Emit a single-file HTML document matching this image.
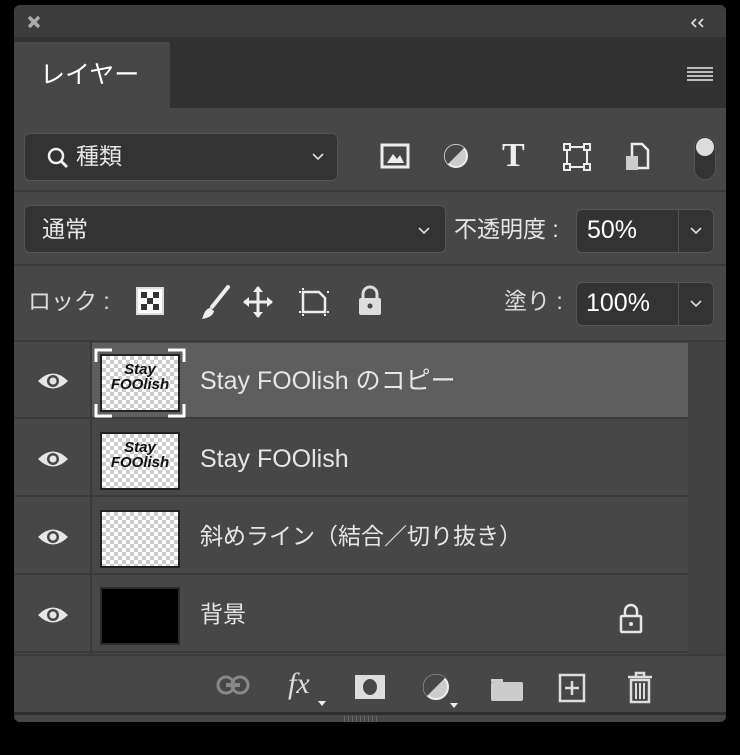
<!DOCTYPE html>
<html><head><meta charset="utf-8"><style>
*{margin:0;padding:0;box-sizing:border-box}
body{width:740px;height:755px;background:#000;position:relative;overflow:hidden;font-family:"Liberation Sans","Noto Sans CJK JP",sans-serif;color:#e6e6e6}
.a{position:absolute}
.panel{left:14px;top:5px;width:712px;height:717px;background:#474747;border-radius:6px;overflow:hidden}
.box{background:#333;border:1px solid #555;border-radius:6px}
.t{font-size:24px;white-space:nowrap;line-height:1}
.chk{background-color:#fff;background-image:linear-gradient(45deg,#ccc 25%,transparent 25%,transparent 75%,#ccc 75%),linear-gradient(45deg,#ccc 25%,transparent 25%,transparent 75%,#ccc 75%);background-size:8px 8px;background-position:0 0,4px 4px;border:2px solid #222}
.eye{left:23px;width:32px;height:20px}
.row{left:0;width:674px;height:77px;border-bottom:2px solid #3a3a3a}
</style></head><body>
<div class="a panel">
 <div class="a" style="left:0;top:0;width:712px;height:32px;background:#3c3c3c"></div>
 <svg class="a" style="left:13px;top:10px" width="14" height="14"><path d="M2 2l10 10M12 2L2 12" stroke="#aaa" stroke-width="3.5"/></svg>
 <svg class="a" style="left:676px;top:12px" width="16" height="12"><path d="M6 2L2 6l4 4M13 2L9 6l4 4" fill="none" stroke="#ddd" stroke-width="1.6"/></svg>
 <div class="a" style="left:0;top:32px;width:712px;height:71px;background:#323232"></div>
 <div class="a" style="left:0;top:37px;width:156px;height:71px;background:#474747"></div>
 <div class="a t" style="left:26px;top:58px;color:#fff;font-size:25px">レイヤー</div>
 <svg class="a" style="left:673px;top:61px" width="26" height="16"><path d="M0 2h26M0 6h26M0 10h26M0 14h26" stroke="#bbb" stroke-width="2"/></svg>

 <div class="a box" style="left:10px;top:128px;width:314px;height:48px"></div>
 <svg class="a" style="left:32px;top:141px" width="24" height="24"><circle cx="10" cy="10" r="7" fill="none" stroke="#eee" stroke-width="2.5"/><path d="M15 15l6 6" stroke="#eee" stroke-width="3"/></svg>
 <div class="a t" style="left:62px;top:140px;font-size:23px">種類</div>
 <svg class="a" style="left:298px;top:148px" width="12" height="8"><path d="M1 1l5 5 5-5" fill="none" stroke="#ddd" stroke-width="1.6"/></svg>
 <svg class="a" style="left:366px;top:138px" width="30" height="26"><rect x="2" y="2" width="26" height="22" fill="none" stroke="#eee" stroke-width="3"/><path d="M7 20l6-9 4 5 3-4 4 8z" fill="#eee"/></svg>
 <svg class="a" style="left:428px;top:137px" width="28" height="28"><circle cx="14" cy="14" r="11" fill="#ccc" stroke="#eee" stroke-width="2"/><path d="M22 6A11 11 0 0 0 6 22z" fill="#474747"/></svg>
 <div class="a" style="left:488px;top:134px;font-size:34px;line-height:1;font-weight:bold;font-family:'Liberation Serif',serif;color:#eee">T</div>
 <svg class="a" style="left:548px;top:137px" width="30" height="30"><rect x="5" y="5" width="20" height="20" fill="none" stroke="#eee" stroke-width="2"/><g fill="#474747" stroke="#eee" stroke-width="2"><rect x="2" y="2" width="6" height="6"/><rect x="22" y="2" width="6" height="6"/><rect x="2" y="22" width="6" height="6"/><rect x="22" y="22" width="6" height="6"/></g></svg>
 <svg class="a" style="left:610px;top:137px" width="28" height="30"><path d="M8 2h10l6 6v18H8z" fill="none" stroke="#eee" stroke-width="2.5"/><rect x="2" y="14" width="12" height="14" fill="#ccc"/></svg>
 <div class="a" style="left:680px;top:131px;width:22px;height:44px;border-radius:11px;background:#333;border:1px solid #555"></div>
 <div class="a" style="left:682px;top:133px;width:18px;height:18px;border-radius:9px;background:#ddd"></div>

 <div class="a" style="left:0;top:185px;width:712px;height:2px;background:#3a3a3a"></div>
 <div class="a box" style="left:10px;top:200px;width:422px;height:48px"></div>
 <div class="a t" style="left:28px;top:213px;font-size:23px">通常</div>
 <svg class="a" style="left:404px;top:222px" width="12" height="8"><path d="M1 1l5 5 5-5" fill="none" stroke="#ddd" stroke-width="1.6"/></svg>
 <div class="a t" style="left:440px;top:213px;font-size:23px">不透明度 :</div>
 <div class="a box" style="left:562px;top:204px;width:138px;height:44px"></div>
 <div class="a" style="left:664px;top:205px;width:1px;height:42px;background:#555"></div>
 <div class="a t" style="left:573px;top:213px;font-size:25px;color:#fff">50%</div>
 <svg class="a" style="left:676px;top:222px" width="12" height="8"><path d="M1 1l5 5 5-5" fill="none" stroke="#ddd" stroke-width="1.6"/></svg>

 <div class="a" style="left:0;top:259px;width:712px;height:2px;background:#3a3a3a"></div>
 <div class="a t" style="left:14px;top:285px;font-size:23px;color:#ddd">ロック :</div>
 <svg class="a" style="left:122px;top:282px" width="30" height="30"><rect x="1" y="1" width="26" height="26" fill="#fff" stroke="#ddd" stroke-width="2"/><g fill="#333"><rect x="5" y="5" width="6" height="6"/><rect x="17" y="5" width="6" height="6"/><rect x="11" y="11" width="6" height="6"/><rect x="5" y="17" width="6" height="6"/><rect x="17" y="17" width="6" height="6"/></g></svg>
 <svg class="a" style="left:186px;top:280px" width="30" height="36"><path d="M28 2L12 22" stroke="#eee" stroke-width="4" stroke-linecap="round"/><path d="M10 23c-5 1-6 6-8 11 6-1 11-3 12-8z" fill="#eee"/></svg>
 <svg class="a" style="left:228px;top:280px" width="32" height="34"><path d="M16 2v30M2 17h28" stroke="#eee" stroke-width="3"/><path d="M16 1l-5 6h10zM16 33l-5-6h10zM1 17l6-5v10zM31 17l-6-5v10z" fill="#eee"/></svg>
 <svg class="a" style="left:283px;top:281px" width="34" height="32"><path d="M6 6h16l6 6v14H6z" fill="none" stroke="#eee" stroke-width="2.5"/><path d="M2 6h2M2 26h2M30 6h2M30 26h2M6 2v2M6 28v2M28 28v2" stroke="#eee" stroke-width="2"/></svg>
 <svg class="a" style="left:342px;top:280px" width="28" height="32"><path d="M7 14V9a7 7 0 0 1 14 0v5" fill="none" stroke="#ddd" stroke-width="3"/><rect x="3" y="13" width="22" height="17" rx="2" fill="#ddd"/><circle cx="14" cy="21" r="2.5" fill="#474747"/></svg>
 <div class="a t" style="left:490px;top:285px;font-size:23px;color:#ddd">塗り :</div>
 <div class="a box" style="left:562px;top:277px;width:138px;height:44px"></div>
 <div class="a" style="left:664px;top:278px;width:1px;height:42px;background:#555"></div>
 <div class="a t" style="left:572px;top:286px;font-size:25px;color:#fff">100%</div>
 <svg class="a" style="left:676px;top:295px" width="12" height="8"><path d="M1 1l5 5 5-5" fill="none" stroke="#ddd" stroke-width="1.6"/></svg>

 <div class="a" style="left:0;top:335px;width:712px;height:2px;background:#3a3a3a"></div>
 <div class="a" style="left:674px;top:337px;width:38px;height:312px;background:#414141"></div>
 <div class="a" style="left:76px;top:337px;width:2px;height:312px;background:#3a3a3a"></div>
 <div class="a" style="left:78px;top:338px;width:596px;height:76px;background:#5e5e5e"></div>
 <div class="a row" style="top:337px"></div>
 <div class="a row" style="top:415px"></div>
 <div class="a row" style="top:493px"></div>
 <div class="a row" style="top:571px"></div>

 <svg class="a eye" style="top:366px" viewBox="0 0 32 20"><path d="M1 10Q16-5 31 10Q16 25 1 10z" fill="#e6e6e6"/><circle cx="16" cy="10" r="6" fill="#474747"/><circle cx="16" cy="10" r="3.5" fill="#e6e6e6"/></svg>
 <svg class="a eye" style="top:444px" viewBox="0 0 32 20"><path d="M1 10Q16-5 31 10Q16 25 1 10z" fill="#e6e6e6"/><circle cx="16" cy="10" r="6" fill="#474747"/><circle cx="16" cy="10" r="3.5" fill="#e6e6e6"/></svg>
 <svg class="a eye" style="top:522px" viewBox="0 0 32 20"><path d="M1 10Q16-5 31 10Q16 25 1 10z" fill="#e6e6e6"/><circle cx="16" cy="10" r="6" fill="#474747"/><circle cx="16" cy="10" r="3.5" fill="#e6e6e6"/></svg>
 <svg class="a eye" style="top:600px" viewBox="0 0 32 20"><path d="M1 10Q16-5 31 10Q16 25 1 10z" fill="#e6e6e6"/><circle cx="16" cy="10" r="6" fill="#474747"/><circle cx="16" cy="10" r="3.5" fill="#e6e6e6"/></svg>

 <svg class="a" style="left:80px;top:343px" width="92" height="70"><path d="M2 14V2h16M74 2h16v12M2 56v12h16M74 68h16V56" fill="none" stroke="#fff" stroke-width="3"/></svg>
 <div class="a chk" style="left:86px;top:349px;width:80px;height:58px"></div>
 <div class="a" style="left:90px;top:357px;width:72px;text-align:center;color:#111;font-style:italic;font-weight:bold;font-size:15px;line-height:15px">Stay<br>FOOlish</div>
 <div class="a t" style="left:186px;top:364px;font-size:25px">Stay FOOlish のコピー</div>

 <div class="a chk" style="left:86px;top:427px;width:80px;height:58px"></div>
 <div class="a" style="left:90px;top:435px;width:72px;text-align:center;color:#111;font-style:italic;font-weight:bold;font-size:15px;line-height:15px">Stay<br>FOOlish</div>
 <div class="a t" style="left:186px;top:442px;font-size:25px">Stay FOOlish</div>

 <div class="a chk" style="left:86px;top:505px;width:80px;height:58px"></div>
 <div class="a t" style="left:186px;top:520px;font-size:23px">斜めライン（結合／切り抜き）</div>

 <div class="a" style="left:86px;top:582px;width:80px;height:58px;background:#000;border:2px solid #2a2a2a"></div>
 <div class="a t" style="left:186px;top:598px;font-size:23px">背景</div>
 <svg class="a" style="left:604px;top:597px" width="26" height="32"><path d="M7 14V9a6 6 0 0 1 12 0v5" fill="none" stroke="#e6e6e6" stroke-width="2.5"/><rect x="3" y="14" width="20" height="16" rx="1" fill="none" stroke="#e6e6e6" stroke-width="2.5"/><circle cx="13" cy="22" r="2" fill="#e6e6e6"/></svg>

 <div class="a" style="left:0;top:649px;width:712px;height:2px;background:#3a3a3a"></div>
 <svg class="a" style="left:202px;top:669px" width="36" height="22"><rect x="2" y="3" width="16" height="16" rx="8" fill="none" stroke="#888" stroke-width="3"/><rect x="16" y="3" width="16" height="16" rx="8" fill="none" stroke="#888" stroke-width="3"/><path d="M10 11h14" stroke="#888" stroke-width="4"/></svg>
 <div class="a" style="left:274px;top:664px;font-size:30px;line-height:1;font-style:italic;font-family:'Liberation Serif',serif;color:#ddd">fx</div>
 <div class="a" style="left:304px;top:696px;width:0;height:0;border-left:4px solid transparent;border-right:4px solid transparent;border-top:5px solid #eee"></div>
 <svg class="a" style="left:340px;top:669px" width="32" height="26"><rect x="1" y="1" width="30" height="24" fill="#ddd"/><ellipse cx="16" cy="13" rx="7" ry="8" fill="#474747"/></svg>
 <svg class="a" style="left:408px;top:668px" width="28" height="28"><circle cx="14" cy="14" r="12" fill="#ccc" stroke="#eee" stroke-width="2"/><path d="M23 5A12 12 0 0 0 5 23z" fill="#474747"/></svg>
 <div class="a" style="left:436px;top:698px;width:0;height:0;border-left:4px solid transparent;border-right:4px solid transparent;border-top:5px solid #eee"></div>
 <svg class="a" style="left:476px;top:670px" width="34" height="26"><path d="M1 4h12v3H1z" fill="#ccc"/><rect x="1" y="7" width="32" height="19" rx="2" fill="#ccc"/></svg>
 <svg class="a" style="left:544px;top:668px" width="28" height="30"><rect x="2" y="2" width="24" height="26" fill="none" stroke="#ddd" stroke-width="2.5"/><path d="M14 8v14M7 15h14" stroke="#ddd" stroke-width="2.5"/></svg>
 <svg class="a" style="left:612px;top:666px" width="28" height="34"><path d="M2 6h24M10 6V2h8v4" fill="none" stroke="#ddd" stroke-width="2.5"/><path d="M5 9h18v22H5z" fill="none" stroke="#ddd" stroke-width="2.5"/><path d="M10 12v16M14 12v16M18 12v16" stroke="#ddd" stroke-width="2"/></svg>

 <div class="a" style="left:0;top:707px;width:712px;height:3px;background:#2e2e2e"></div>
 <div class="a" style="left:330px;top:711px;width:36px;height:6px;background:repeating-linear-gradient(90deg,#666 0 1px,transparent 1px 4px)"></div>
</div>
</body></html>
